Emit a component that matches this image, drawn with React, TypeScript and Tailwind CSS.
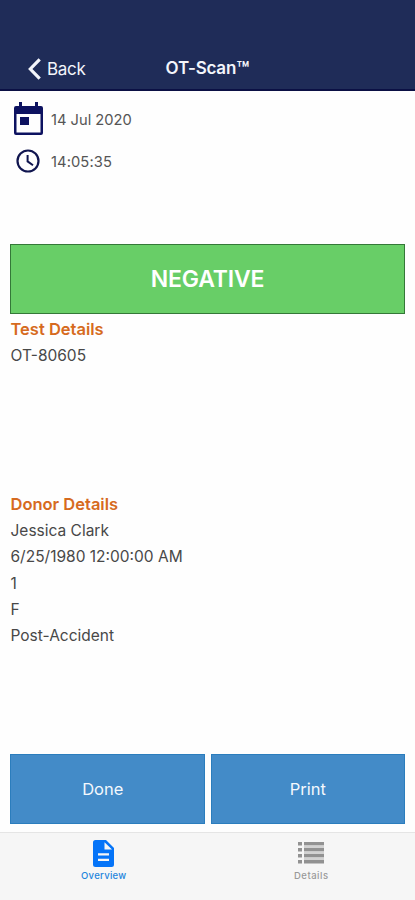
import React from "react";

const donorLines: string[] = [
  "Jessica Clark",
  "6/25/1980 12:00:00 AM",
  "1",
  "F",
  "Post-Accident",
];

function CalendarIcon() {
  return (
    <svg width="29" height="34" viewBox="0 0 29 34" fill="#0d1260">
      <path
        fillRule="evenodd"
        d="M5 0h3v4h13V0h3v4h3a2 2 0 0 1 2 2v25a2 2 0 0 1-2 2H2a2 2 0 0 1-2-2V6a2 2 0 0 1 2-2h3zM2.500 12v18.500h24V12z"
      />
      <path d="M6 15h9v8H6z" />
    </svg>
  );
}

function ClockIcon() {
  return (
    <svg width="24" height="24" viewBox="0 0 24 24" fill="none" stroke="#10154f">
      <circle cx="12" cy="12" r="10.5" strokeWidth="2.2" />
      <path d="M11.6 6v6.4l5.4 3.8" strokeWidth="2" />
    </svg>
  );
}

function DocumentIcon() {
  return (
    <svg width="21" height="27" viewBox="0 0 21 27" fill="#0574f8">
      <path
        fillRule="evenodd"
        d="M2.5 0H13l8 8v16.5a2.5 2.5 0 0 1-2.5 2.5h-16A2.5 2.5 0 0 1 0 24.5V2.5A2.5 2.5 0 0 1 2.5 0zM11.5 2.2v7.3H19zM5 13.2v2.3h11v-2.3zM5 18.7V21h11v-2.3z"
      />
    </svg>
  );
}

function ListIcon() {
  return (
    <svg width="26" height="22" viewBox="0 0 26 22" fill="#929292">
      {[0, 6, 12, 18].map((y) => (
        <g key={y}>
          <rect x="0" y={y} width="4" height="3.5" />
          <rect x="6" y={y} width="20" height="3.5" />
        </g>
      ))}
      {[3.5, 9.5, 15.5].map((y) => (
        <rect key={y} x="6" y={y} width="20" height="2.5" fill="#d2d2d2" />
      ))}
    </svg>
  );
}

export default function App() {
  return (
    <div className="flex h-[900px] w-full flex-col bg-[#fefefe] font-['Inter',sans-serif] text-[#484848]">
      <header className="grid h-[91px] shrink-0 grid-cols-3 items-end border-b-2 border-[#0b1044] bg-[#1f2c58] pb-[8px] text-[#f3f5fb]">
        <div className="flex h-6 items-center pl-[28px]">
          <svg className="mb-px" width="13" height="22" viewBox="0 0 13 22" fill="none" stroke="currentColor" strokeWidth="3.2">
            <path d="M11.7 1.3 2.3 11l9.4 9.7" />
          </svg>
          <span className="ml-[6px] text-[17px] leading-6 tracking-[-0.3px]">Back</span>
        </div>
        <h1 className="flex h-6 justify-center text-[17px] leading-[22px] font-semibold tracking-[-0.2px] whitespace-nowrap">
          OT-Scan<span className="pt-[2px] text-[21px] tracking-normal">™</span>
        </h1>
      </header>

      <main className="flex flex-1 flex-col px-[10px]">
        <section className="h-[153px] pt-[7px] text-[14.7px] text-[#555555]">
          <div className="flex h-[42px] items-center">
            <div className="flex w-[36px] justify-center"><CalendarIcon /></div>
            <span className="ml-[5px] pt-[2px]">14 Jul 2020</span>
          </div>
          <div className="flex h-[42px] items-center">
            <div className="flex w-[36px] justify-center"><ClockIcon /></div>
            <span className="ml-[5px] pt-[2px] tracking-[0.1px]">14:05:35</span>
          </div>
        </section>

        <div className="flex h-[70px] items-center justify-center border border-[#347838] bg-[#68ce67] text-[23px] font-semibold tracking-[-0.2px] text-white">
          NEGATIVE
        </div>

        <section className="h-[175px] pt-[2px] pl-[0.5px] text-[15.5px] leading-[26.2px]">
          <h2 className="mb-px text-[16.5px] font-semibold text-[#d66a20]">Test Details</h2>
          <p>OT-80605</p>
        </section>

        <section className="flex-1 pt-[2px] pl-[0.5px] text-[15.5px] leading-[26.2px]">
          <h2 className="mb-px text-[16.5px] font-semibold text-[#d66a20]">Donor Details</h2>
          {donorLines.map((line) => (
            <p key={line}>{line}</p>
          ))}
        </section>

        <div className="mb-[8px] grid h-[70px] grid-cols-2 gap-[6px] text-[16.5px] text-[#f3f8fd]">
          <button className="border border-[#2b7dbd] bg-[#438bc8] pr-[9px]">Done</button>
          <button className="border border-[#2b7dbd] bg-[#438bc8]">Print</button>
        </div>
      </main>

      <nav className="grid h-[68px] shrink-0 grid-cols-2 border-t border-[#e5e5e5] bg-[#f6f6f6] text-[9.5px] font-medium">
        <div className="flex flex-col items-center pt-[7px] text-[#2384dc]">
          <DocumentIcon />
          <span className="mt-[2px] leading-[14px] tracking-[0.3px]">Overview</span>
        </div>
        <div className="flex flex-col items-center pt-[9px] text-[#999999]">
          <ListIcon />
          <span className="mt-[5px] leading-[14px] tracking-[0.5px]">Details</span>
        </div>
      </nav>
    </div>
  );
}
